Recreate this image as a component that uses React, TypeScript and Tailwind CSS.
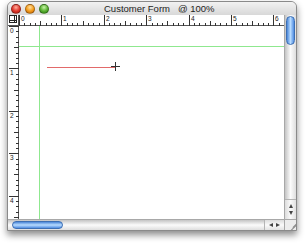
import React from 'react';

const INCH = 42.4;
const ticks = (len: number) => Array.from({ length: Math.floor(len / (INCH / 8)) + 1 }, (_, i) => i);

function TopRuler() {
  return (
    <svg width="265" height="11" className="block">
      {ticks(265).map(i => {
        const x = Math.round(i * (INCH / 8)) + 0.5;
        const h = i % 8 === 0 ? 11 : i % 4 === 0 ? 5 : 3;
        return <line key={i} x1={x} x2={x} y1={11 - h} y2={11} stroke="#333" strokeWidth="1" />;
      })}
      {[0, 1, 2, 3, 4, 5, 6].map(n => (
        <text key={n} x={Math.round(n * INCH) + 2} y="6" fontSize="6.5" fill="#222" fontFamily="Liberation Sans, sans-serif">{n}</text>
      ))}
    </svg>
  );
}

function LeftRuler() {
  return (
    <svg width="10" height="193" className="block">
      {ticks(193).map(i => {
        const y = Math.round(i * (INCH / 8)) + 0.5;
        const w = i % 8 === 0 ? 10 : i % 4 === 0 ? 5 : 3;
        return <line key={i} y1={y} y2={y} x1={10 - w} x2={10} stroke="#333" strokeWidth="1" />;
      })}
      {[0, 1, 2, 3, 4].map(n => (
        <text key={n} x="1" y={Math.round(n * INCH) + 7} fontSize="6.5" fill="#222" fontFamily="Liberation Sans, sans-serif">{n}</text>
      ))}
    </svg>
  );
}

function Light({ c }: { c: string }) {
  return <span className={`w-[10px] h-[10px] rounded-full border border-black/30 ${c}`} />;
}

export default function App() {
  return (
    <div className="w-[305px] h-[243px] bg-white pt-[1px]">
      <div className="ml-[7px] w-[290px] h-[230px] flex flex-col rounded-t-[6px] border border-[#8a8a8a] bg-[#e4e4e4] shadow-[0_4px_7px_rgba(0,0,0,0.45)] overflow-hidden">
        {/* title bar */}
        <div className="h-[14px] relative flex items-center bg-gradient-to-b from-[#f2f2f2] to-[#d8d8d8]">
          <div className="flex gap-[4px] pl-[3px]">
            <Light c="bg-[radial-gradient(circle_at_50%_30%,#ffb0a0,#e0352a_55%,#9a1c12)]" />
            <Light c="bg-[radial-gradient(circle_at_50%_30%,#ffe0a0,#f49a1a_55%,#b05a08)]" />
            <Light c="bg-[radial-gradient(circle_at_50%_30%,#c8f5a8,#58b030_55%,#2a7412)]" />
          </div>
          <span className="absolute left-[96px] top-[1px] text-[9.5px] leading-[12px] text-[#222] whitespace-pre font-['Liberation_Sans',sans-serif]">
            Customer Form   @ 100%
          </span>
        </div>

        <div className="flex-1 grid grid-cols-[11px_265px_12px] grid-rows-[11px_193px_11px]">
          {/* corner box */}
          <div className="bg-white border-r border-b border-[#555] flex items-start justify-start">
            <div className="w-[8px] h-[8px] border border-[#222] mt-[0px] ml-[1px] relative">
              <div className="absolute left-0 right-0 top-[4px] h-px bg-[#222]" />
              <div className="absolute top-0 bottom-0 left-[4px] w-px bg-[#222]" />
            </div>
          </div>
          <div className="bg-white border-b border-[#555]">
            <TopRuler />
          </div>

          {/* vertical scrollbar */}
          <div className="row-span-2 flex flex-col bg-gradient-to-r from-[#c4c4c4] via-[#fbfbfb] to-[#dedede] border-l border-[#a8a8a8]">
            <div className="flex-1 pt-[1px] px-[1px]">
              <div className="h-[29px] rounded-full border border-[#3c6fb4] bg-gradient-to-r from-[#4a86d8] via-[#b8dcff] to-[#4f8be0]" />
            </div>
            <div className="h-[20px] flex flex-col items-center justify-center gap-[3px] border-t border-[#b4b4b4] bg-gradient-to-r from-[#dcdcdc] via-[#fafafa] to-[#e2e2e2]">
              <span className="w-0 h-0 border-l-[2.5px] border-r-[2.5px] border-b-[4px] border-l-transparent border-r-transparent border-b-[#444]" />
              <span className="w-0 h-0 border-l-[2.5px] border-r-[2.5px] border-t-[4px] border-l-transparent border-r-transparent border-t-[#444]" />
            </div>
          </div>

          {/* left ruler */}
          <div className="bg-white border-r border-[#555] pl-[1px]">
            <LeftRuler />
          </div>

          {/* canvas */}
          <div className="relative bg-white overflow-hidden">
            <div className="absolute left-0 right-0 top-[20px] h-px bg-[#8fe88f]" />
            <div className="absolute top-0 bottom-0 left-[20px] w-px bg-[#8fe88f]" />
            <div className="absolute left-[28px] top-[41px] w-[68px] h-px bg-[#e26a6a]" />
            <div className="absolute left-[92px] top-[36px] w-[9px] h-[9px]">
              <div className="absolute left-0 right-0 top-[4px] h-px bg-[#333]" />
              <div className="absolute top-0 bottom-0 left-[4px] w-px bg-[#333]" />
            </div>
          </div>

          {/* horizontal scrollbar */}
          <div className="col-span-2 flex bg-gradient-to-b from-[#c4c4c4] via-[#fbfbfb] to-[#dedede] border-t border-[#a8a8a8]">
            <div className="flex-1 pl-[4px] py-[1px]">
              <div className="w-[51px] h-[8px] rounded-full border border-[#3c6fb4] bg-gradient-to-b from-[#4a86d8] via-[#b8dcff] to-[#4f8be0]" />
            </div>
            <div className="w-[20px] flex items-center justify-center gap-[3px] border-l border-[#b4b4b4] bg-gradient-to-b from-[#dcdcdc] via-[#fafafa] to-[#e2e2e2]">
              <span className="w-0 h-0 border-t-[2.5px] border-b-[2.5px] border-r-[4px] border-t-transparent border-b-transparent border-r-[#444]" />
              <span className="w-0 h-0 border-t-[2.5px] border-b-[2.5px] border-l-[4px] border-t-transparent border-b-transparent border-l-[#444]" />
            </div>
          </div>

          {/* grow box */}
          <div className="bg-[#ececec] border-t border-l border-[#a8a8a8] relative overflow-hidden">
            <div className="absolute right-[-3px] bottom-[2px] w-[10px] h-px bg-[#888] -rotate-45" />
            <div className="absolute right-[-2px] bottom-[4px] w-[6px] h-px bg-[#888] -rotate-45" />
          </div>
        </div>
      </div>
    </div>
  );
}
